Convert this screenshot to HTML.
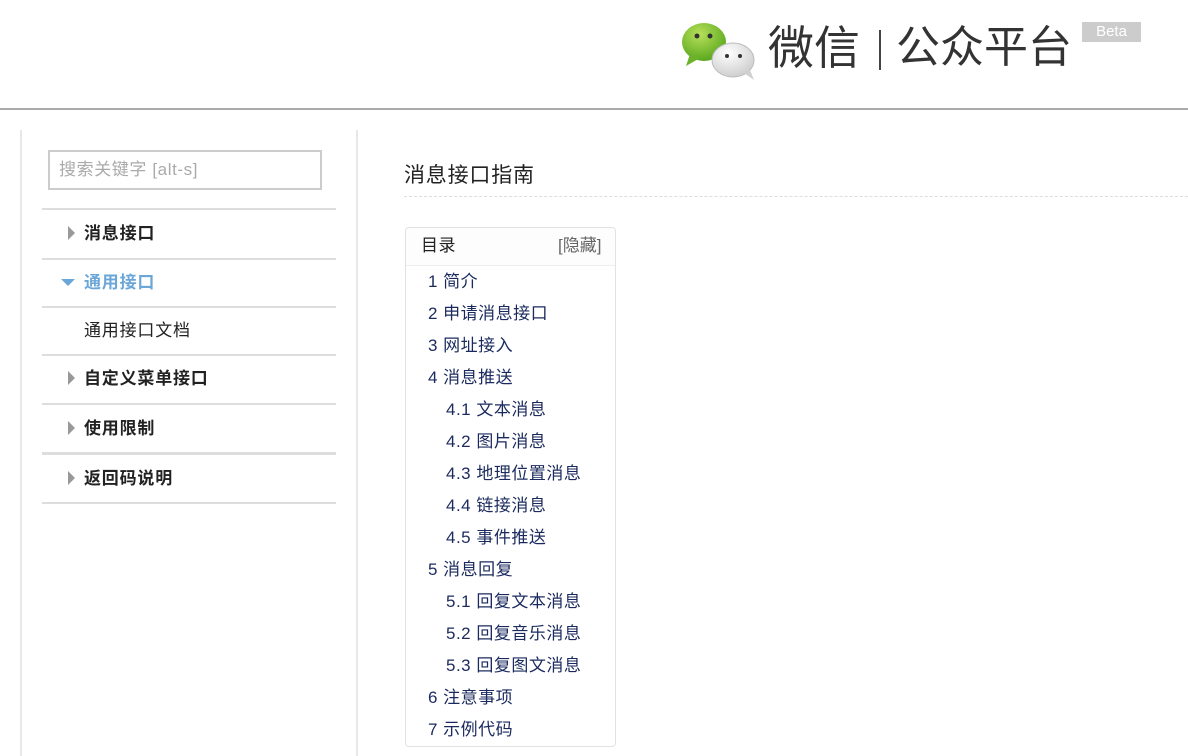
<!DOCTYPE html>
<html><head><meta charset="utf-8"><style>
*{margin:0;padding:0;box-sizing:border-box}
body{width:1188px;height:756px;overflow:hidden;background:#fff;font-family:"Liberation Sans","Noto Sans CJK SC",sans-serif;position:relative}
.hdr{position:absolute;left:0;top:0;width:1188px;height:110px;border-bottom:2px solid #aaa;background:#fff}
.abs{position:absolute}
.vl{position:absolute;top:130px;bottom:0;width:2px;background:#e8e8e8}
.search{position:absolute;left:48px;top:150px;width:274px;height:40px;border:2px solid #ccc;color:#aaa;font-size:17px;line-height:36px;padding-left:9px;letter-spacing:0.6px}
.hl{position:absolute;left:42px;width:294px;height:2px;background:#ddd}
.item{position:absolute;left:84px;font-size:17px;font-weight:bold;color:#222;line-height:20px;letter-spacing:0.8px}
.tri{position:absolute;left:68px;width:0;height:0;border-top:7px solid transparent;border-bottom:7px solid transparent;border-left:7px solid #999}
.toc{position:absolute;left:405px;top:227px;width:211px;height:520px;border:1px solid #e2e2de;border-radius:4px}
.toc .t{position:absolute;font-size:17px;color:#1b2a5e;line-height:20px;white-space:nowrap;letter-spacing:0.5px}
</style></head><body>
<div class="hdr">
<svg class="abs" style="left:680px;top:18px" width="80" height="66" viewBox="0 0 80 66">
<defs><radialGradient id="g" cx="40%" cy="30%" r="70%"><stop offset="0" stop-color="#b8e05a"/><stop offset="1" stop-color="#5aa81e"/></radialGradient>
<radialGradient id="w" cx="40%" cy="30%" r="70%"><stop offset="0" stop-color="#fff"/><stop offset="1" stop-color="#cfcfcf"/></radialGradient></defs>
<ellipse cx="24" cy="24" rx="22" ry="19" fill="url(#g)"/>
<path d="M10 36 L6 48 L20 40Z" fill="#6ab22a"/>
<circle cx="17" cy="18" r="2.5" fill="#333"/><circle cx="30" cy="18" r="2.5" fill="#333"/>
<ellipse cx="53" cy="42" rx="21" ry="17" fill="url(#w)" stroke="#bbb" stroke-width="1"/>
<path d="M64 55 L74 62 L70 52Z" fill="#d0d0d0"/>
<circle cx="47" cy="38" r="2" fill="#333"/><circle cx="60" cy="38" r="2" fill="#333"/>
</svg>
<div class="abs" style="left:768px;top:20px;font-size:46px;color:#333;line-height:56px">微信</div>
<div class="abs" style="left:879px;top:30px;width:2px;height:40px;background:#444"></div>
<div class="abs" style="left:896px;top:20px;font-size:44px;color:#333;line-height:56px">公众平台</div>
<div class="abs" style="left:1082px;top:22px;width:59px;height:20px;background:#ccc;color:#fff;font-size:15px;line-height:20px;text-align:center">Beta</div>
</div>
<div class="vl" style="left:20px"></div>
<div class="vl" style="left:356px"></div>
<div class="search">搜索关键字 [alt-s]</div>
<div class="hl" style="top:208px"></div>
<div class="tri" style="top:226px"></div><div class="item" style="top:224px">消息接口</div>
<div class="hl" style="top:258px"></div>
<div class="abs" style="left:61px;top:279px;border-left:7px solid transparent;border-right:7px solid transparent;border-top:7px solid #6aa7d8;width:0;height:0"></div>
<div class="item" style="top:273px;color:#6aa7d8">通用接口</div>
<div class="hl" style="top:306px"></div>
<div class="item" style="top:321px;font-weight:normal">通用接口文档</div>
<div class="hl" style="top:354px"></div>
<div class="tri" style="top:371px"></div><div class="item" style="top:369px">自定义菜单接口</div>
<div class="hl" style="top:403px"></div>
<div class="tri" style="top:421px"></div><div class="item" style="top:419px">使用限制</div>
<div class="hl" style="top:452px;height:3px"></div>
<div class="tri" style="top:471px"></div><div class="item" style="top:469px">返回码说明</div>
<div class="hl" style="top:502px"></div>
<div class="abs" style="left:404px;top:163px;font-size:21px;color:#222;line-height:26px;letter-spacing:0.8px">消息接口指南</div>
<div class="abs" style="left:404px;top:196px;width:784px;border-top:1px dashed #ddd"></div>
<div class="toc">
<div class="abs" style="left:0;top:0;width:209px;height:38px;border-bottom:1px solid #eee;border-radius:4px 4px 0 0;background:#fdfdfd"></div>
<div class="t" style="left:15px;top:8px;color:#222">目录</div>
<div class="t" style="left:152px;top:8px;color:#666;letter-spacing:0">[隐藏]</div>
<div class="t" style="left:22px;top:44px">1 简介</div>
<div class="t" style="left:22px;top:76px">2 申请消息接口</div>
<div class="t" style="left:22px;top:108px">3 网址接入</div>
<div class="t" style="left:22px;top:140px">4 消息推送</div>
<div class="t" style="left:40px;top:172px">4.1 文本消息</div>
<div class="t" style="left:40px;top:204px">4.2 图片消息</div>
<div class="t" style="left:40px;top:236px">4.3 地理位置消息</div>
<div class="t" style="left:40px;top:268px">4.4 链接消息</div>
<div class="t" style="left:40px;top:300px">4.5 事件推送</div>
<div class="t" style="left:22px;top:332px">5 消息回复</div>
<div class="t" style="left:40px;top:364px">5.1 回复文本消息</div>
<div class="t" style="left:40px;top:396px">5.2 回复音乐消息</div>
<div class="t" style="left:40px;top:428px">5.3 回复图文消息</div>
<div class="t" style="left:22px;top:460px">6 注意事项</div>
<div class="t" style="left:22px;top:492px">7 示例代码</div>
</div>
</body></html>
